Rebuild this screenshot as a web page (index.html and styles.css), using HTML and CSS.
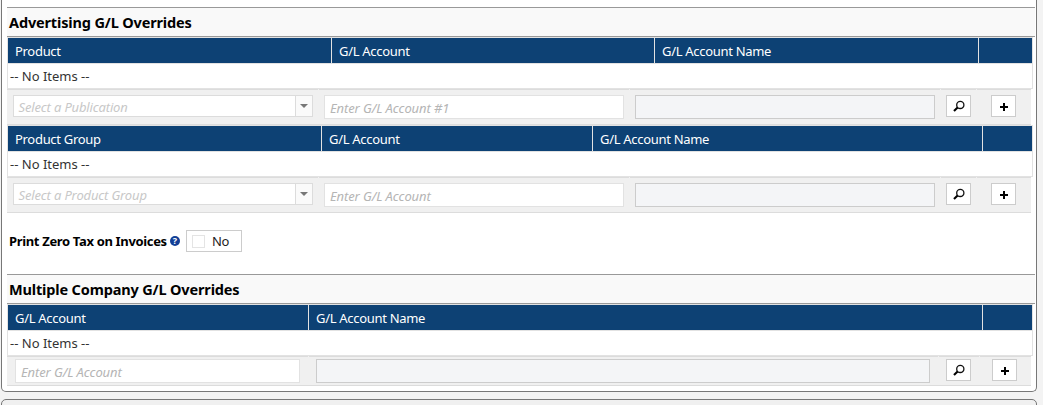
FILE: index.html
```html
<!DOCTYPE html>
<html lang="en">
<head>
<meta charset="utf-8">
<title>G/L Overrides</title>
<link rel="stylesheet" href="styles.css">
</head>
<body>
<svg width="0" height="0" class="defs">
  <symbol id="search" viewBox="0 0 12 12"><circle cx="7.3" cy="4.9" r="3.6" fill="none" stroke="#111" stroke-width="1.3"/><path d="M4.6 7.6L1 11" stroke="#000" stroke-width="2.1"/></symbol>
  <symbol id="plus" viewBox="0 0 8 8"><path d="M4 0V8M0 4H8" stroke="#000" stroke-width="2"/></symbol>
</svg>
<main class="panel">
  <h2 class="section-title"><span>Advertising G/L Overrides</span></h2>
  <section class="grid cols-product">
    <div class="head"><div>Product</div><div>G/L Account</div><div>G/L Account Name</div><div></div></div>
    <div class="empty">-- No Items --</div>
  </section>
  <div class="entry entry-wide">
    <div class="cell"><div class="select"><span>Select a Publication</span><i></i></div></div>
    <div class="cell"><div class="input">Enter G/L Account #1</div></div>
    <div class="cell"><div class="input readonly"></div></div>
    <div class="cell"><button class="btn"><svg class="search"><use href="#search"/></svg></button></div>
    <div class="cell"><button class="btn"><svg class="plus"><use href="#plus"/></svg></button></div>
  </div>
  <section class="grid cols-group">
    <div class="head"><div>Product Group</div><div>G/L Account</div><div>G/L Account Name</div><div></div></div>
    <div class="empty">-- No Items --</div>
  </section>
  <div class="entry entry-wide">
    <div class="cell"><div class="select"><span>Select a Product Group</span><i></i></div></div>
    <div class="cell"><div class="input">Enter G/L Account</div></div>
    <div class="cell"><div class="input readonly"></div></div>
    <div class="cell"><button class="btn"><svg class="search"><use href="#search"/></svg></button></div>
    <div class="cell"><button class="btn"><svg class="plus"><use href="#plus"/></svg></button></div>
  </div>
  <div class="option">
    <span class="option-label">Print Zero Tax on Invoices</span>
    <span class="help">?</span>
    <div class="toggle"><i></i><span>No</span></div>
  </div>
  <h2 class="section-title"><span>Multiple Company G/L Overrides</span></h2>
  <section class="grid cols-company">
    <div class="head"><div>G/L Account</div><div>G/L Account Name</div><div></div></div>
    <div class="empty">-- No Items --</div>
  </section>
  <div class="entry entry-company">
    <div class="cell"><div class="input">Enter G/L Account</div></div>
    <div class="cell"><div class="input readonly"></div></div>
    <div class="cell"><button class="btn"><svg class="search"><use href="#search"/></svg></button></div>
    <div class="cell"><button class="btn"><svg class="plus"><use href="#plus"/></svg></button></div>
  </div>
</main>
<div class="panel next-panel"></div>
</body>
</html>
```
FILE: styles.css
```css
* { box-sizing: border-box; }
body {
  margin: 0;
  height: 405px;
  overflow: hidden;
  background: #f3f3f3;
  font: 13px/18px "Noto Sans", "Open Sans", sans-serif;
  letter-spacing: -0.3px;
  color: #333;
}
.defs { display: block; height: 0; }
.panel {
  width: 1036px;
  height: 392px;
  margin-left: 1px;
  padding: 7px 1px 0 5px;
  background: #fff;
  border: 1px solid #777;
  border-top: 0;
  border-radius: 0 0 5px 5px;
}
.next-panel {
  height: 20px;
  margin-top: 7px;
  background: #f0f0f0;
  border-top: 1px solid #777;
  border-radius: 5px 5px 0 0;
}
.section-title {
  height: 30px;
  margin: 0;
  padding-left: 2px;
  border: solid #999;
  border-width: 1px 0;
  background: #f9f9f9;
  color: #000;
  font-size: 14.5px;
  line-height: 29px;
  font-weight: 700;
  letter-spacing: -0.15px;
}
.grid {
  width: 1026px;
  border: 1px solid #e2e2e2;
  background: #fff;
}
.head {
  display: grid;
  height: 26px;
  background: #0d4174;
  border-bottom: 1px solid #e2e2e2;
  color: #fff;
}
.cols-product .head { grid-template-columns: 324px 323px 324px 1fr; }
.cols-group .head { grid-template-columns: 314px 271px 390px 1fr; }
.cols-company .head { grid-template-columns: 301px 674px 1fr; }
.head div { padding-left: 7px; line-height: 26px; border-right: 1px solid #e2e2e2; }
.head div:last-child { border-right: 0; }
.empty { height: 24px; padding-left: 2px; line-height: 25px; letter-spacing: 0; }
.entry {
  display: grid;
  column-gap: 1px;
  width: 1024px;
  height: 36px;
  background: #f0f0f0;
  border-bottom: 1px solid #dcdcdc;
}
.entry-wide { grid-template-columns: 311px 310px 310px 35px 1fr; }
.entry-company { grid-template-columns: 301px 629px 40px 1fr; height: 30px; }
.cell { border-top: 1px solid #dcdcdc; padding: 5px 5px 0; }
.entry-wide .cell:first-child { padding-left: 6px; }
.entry-wide .cell:last-child { padding-left: 14px; }
.entry-company .cell { padding: 2px 8px 0 7px; }
.entry-company .cell:first-child { padding-left: 8px; padding-right: 8px; }
.entry-company .cell:last-child { padding-left: 12px; }
.input, .select {
  height: 24px;
  padding-left: 5px;
  background: #fff;
  border: 1px solid #e2e2e2;
  color: #b5b5b5;
  font-style: italic;
  line-height: 25px;
  letter-spacing: -0.1px;
}
.input.readonly { background: #f4f5f7; border-color: #ccc; }
.select {
  display: flex;
  justify-content: space-between;
  width: 300px;
  height: 22px;
  padding-left: 4.5px;
  border-color: #dcdcdc;
  color: #c8c8c8;
  line-height: 22px;
  letter-spacing: -0.15px;
}
.select i {
  display: grid;
  place-items: center;
  width: 17px;
  border-left: 1px solid #dcdcdc;
  background: #fafafa;
}
.select i::after {
  content: "";
  border: solid transparent;
  border-width: 4px 4px 0;
  border-top-color: #777;
}
.btn {
  display: grid;
  place-items: center;
  width: 25px;
  height: 22px;
  margin: 0;
  padding: 0;
  border: 1px solid #ccc;
  background: #fff;
}
.btn .search { width: 12px; height: 12px; }
.btn .plus { width: 8px; height: 8px; margin: 2px 0 0 1px; }
.option {
  display: flex;
  align-items: center;
  height: 22px;
  margin: 17px 0 22px;
  padding-left: 2px;
}
.option-label { width: 161px; white-space: nowrap; color: #000; font-weight: 700; letter-spacing: -0.34px; }
.help {
  width: 10px;
  height: 10px;
  border-radius: 50%;
  background: #123f96;
  color: #fff;
  font-size: 9px;
  line-height: 10px;
  font-weight: 700;
  letter-spacing: 0;
  text-align: center;
}
.toggle {
  display: flex;
  align-items: center;
  gap: 7px;
  width: 56px;
  height: 22px;
  margin-left: 6px;
  padding-left: 5px;
  border: 1px solid #ccc;
  color: #222;
}
.toggle i { width: 13px; height: 13px; border: 1px solid #e4e4e4; }
```
